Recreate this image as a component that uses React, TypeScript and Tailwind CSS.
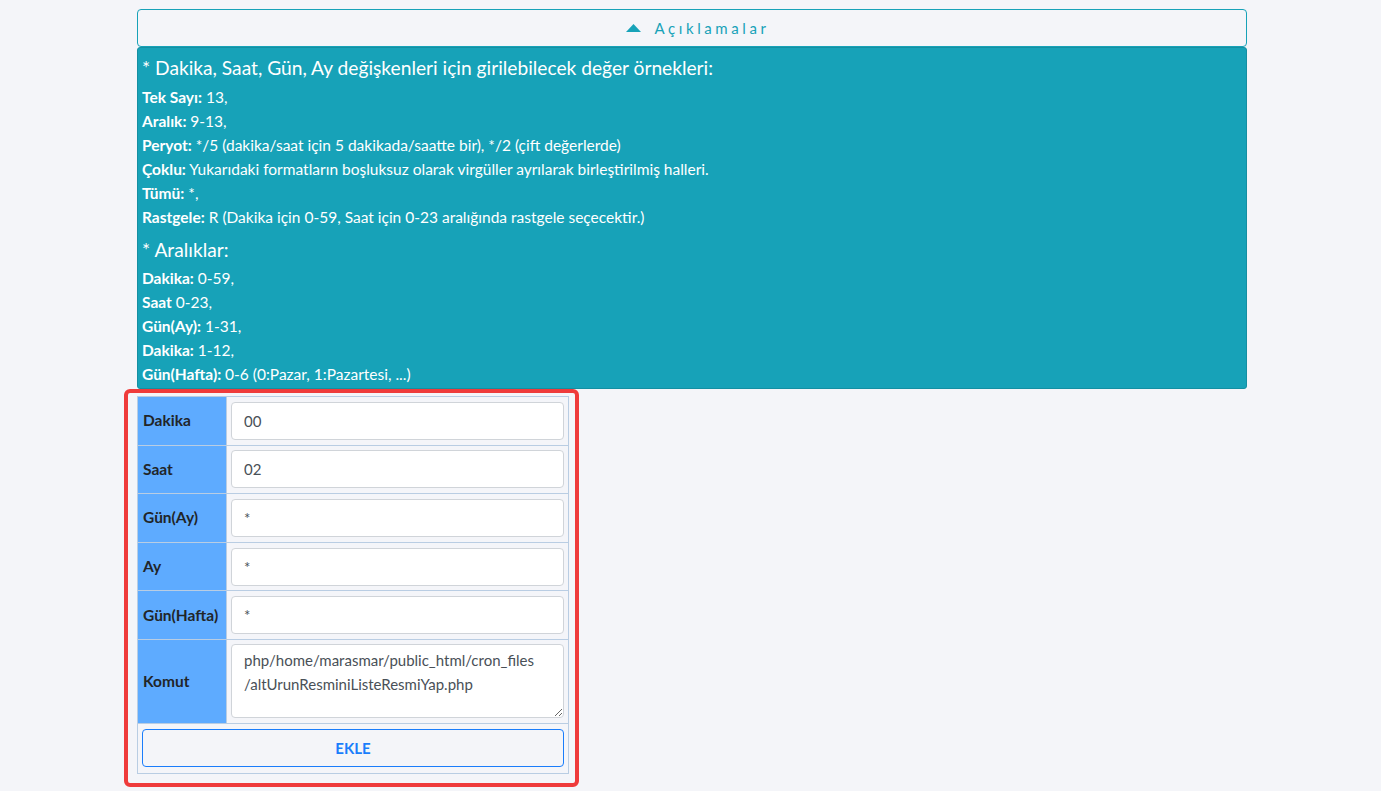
import { useState } from "react";

const examples = [
  { k: "Tek Sayı:", v: " 13," },
  { k: "Aralık:", v: " 9-13," },
  { k: "Peryot:", v: " */5 (dakika/saat için 5 dakikada/saatte bir), */2 (çift değerlerde)" },
  { k: "Çoklu:", v: " Yukarıdaki formatların boşluksuz olarak virgüller ayrılarak birleştirilmiş halleri." },
  { k: "Tümü:", v: " *," },
  { k: "Rastgele:", v: " R (Dakika için 0-59, Saat için 0-23 aralığında rastgele seçecektir.)" },
];

const ranges = [
  { k: "Dakika:", v: " 0-59," },
  { k: "Saat", v: " 0-23," },
  { k: "Gün(Ay):", v: " 1-31," },
  { k: "Dakika:", v: " 1-12," },
  { k: "Gün(Hafta):", v: " 0-6 (0:Pazar, 1:Pazartesi, ...)" },
];

const fields = [
  { label: "Dakika", value: "00" },
  { label: "Saat", value: "02" },
  { label: "Gün(Ay)", value: "*" },
  { label: "Ay", value: "*" },
  { label: "Gün(Hafta)", value: "*" },
];

export default function App() {
  const [open, setOpen] = useState(true);

  return (
    <div className="min-h-screen bg-[#f4f5f9] font-['Lato','Liberation_Sans',sans-serif] text-[#212529]">
      <div className="pl-[137px] pt-[9px] w-[1247px]">
        {/* Toggle */}
        <button
          onClick={() => setOpen(!open)}
          className="w-[1110px] h-[38px] border border-[#17a2b8] rounded-[4px] flex items-center justify-center gap-[13px] pl-[12px] text-[#17a2b8] text-[15px] tracking-[0.24em]"
        >
          <svg width="15" height="9" viewBox="0 0 15 9">
            <path d="M7.5 0 L15 8 L0 8 Z" fill="#17a2b8" />
          </svg>
          Açıklamalar
        </button>

        {open && (
          <div className="w-[1110px] bg-[#17a2b8] border border-[#148fa2] rounded-[3px] text-white px-[4px] pt-[6px] pb-[2px] text-[15.5px]">
            <h4 className="text-[19.2px] leading-[28px] mb-[3px]">* Dakika, Saat, Gün, Ay değişkenleri için girilebilecek değer örnekleri:</h4>
            {examples.map((e) => (
              <div key={e.k} className="leading-[24px]">
                <b>{e.k}</b>
                {e.v}
              </div>
            ))}
            <h4 className="text-[19.2px] leading-[28px] mt-[7px] mb-[2px]">* Aralıklar:</h4>
            {ranges.map((e, i) => (
              <div key={i} className="leading-[24px]">
                <b>{e.k}</b>
                {e.v}
              </div>
            ))}
          </div>
        )}
      </div>

      {/* Form */}
      <div className="ml-[124px] w-[455px] border-[4px] border-[#ef3b3b] rounded-[6px] px-[9px] pt-[3px] pb-[9px]">
        <table className="w-[432px] border-collapse text-[15.5px]">
          <tbody>
            {fields.map((f) => (
              <tr key={f.label} className="h-[48.6px]">
                <td className="w-[89px] bg-[#5eabff] border border-[#b9cde3] px-[5px] font-bold">{f.label}</td>
                <td className="border border-[#b9cde3] px-[4px]">
                  <input
                    defaultValue={f.value}
                    className="w-full h-[38px] bg-white border border-[#d0d4d9] rounded-[4px] px-[12px] text-[15px] text-[#495057] outline-none"
                  />
                </td>
              </tr>
            ))}
            <tr className="h-[84px]">
              <td className="bg-[#5eabff] border border-[#b9cde3] px-[5px] font-bold">Komut</td>
              <td className="border border-[#b9cde3] px-[4px] py-[4px]">
                <textarea
                  defaultValue={"php/home/marasmar/public_html/cron_files\n/altUrunResminiListeResmiYap.php"}
                  className="block w-full h-[74px] bg-white border border-[#d0d4d9] rounded-[4px] px-[12px] py-[3px] text-[15px] leading-[24px] text-[#495057] outline-none"
                />
              </td>
            </tr>
            <tr className="h-[50px]">
              <td colSpan={2} className="border border-[#b9cde3] px-[4px]">
                <button className="w-full h-[38px] border border-[#1a7dfb] rounded-[4px] text-[#1a7dfb] font-bold text-[15px]">
                  EKLE
                </button>
              </td>
            </tr>
          </tbody>
        </table>
      </div>
    </div>
  );
}
